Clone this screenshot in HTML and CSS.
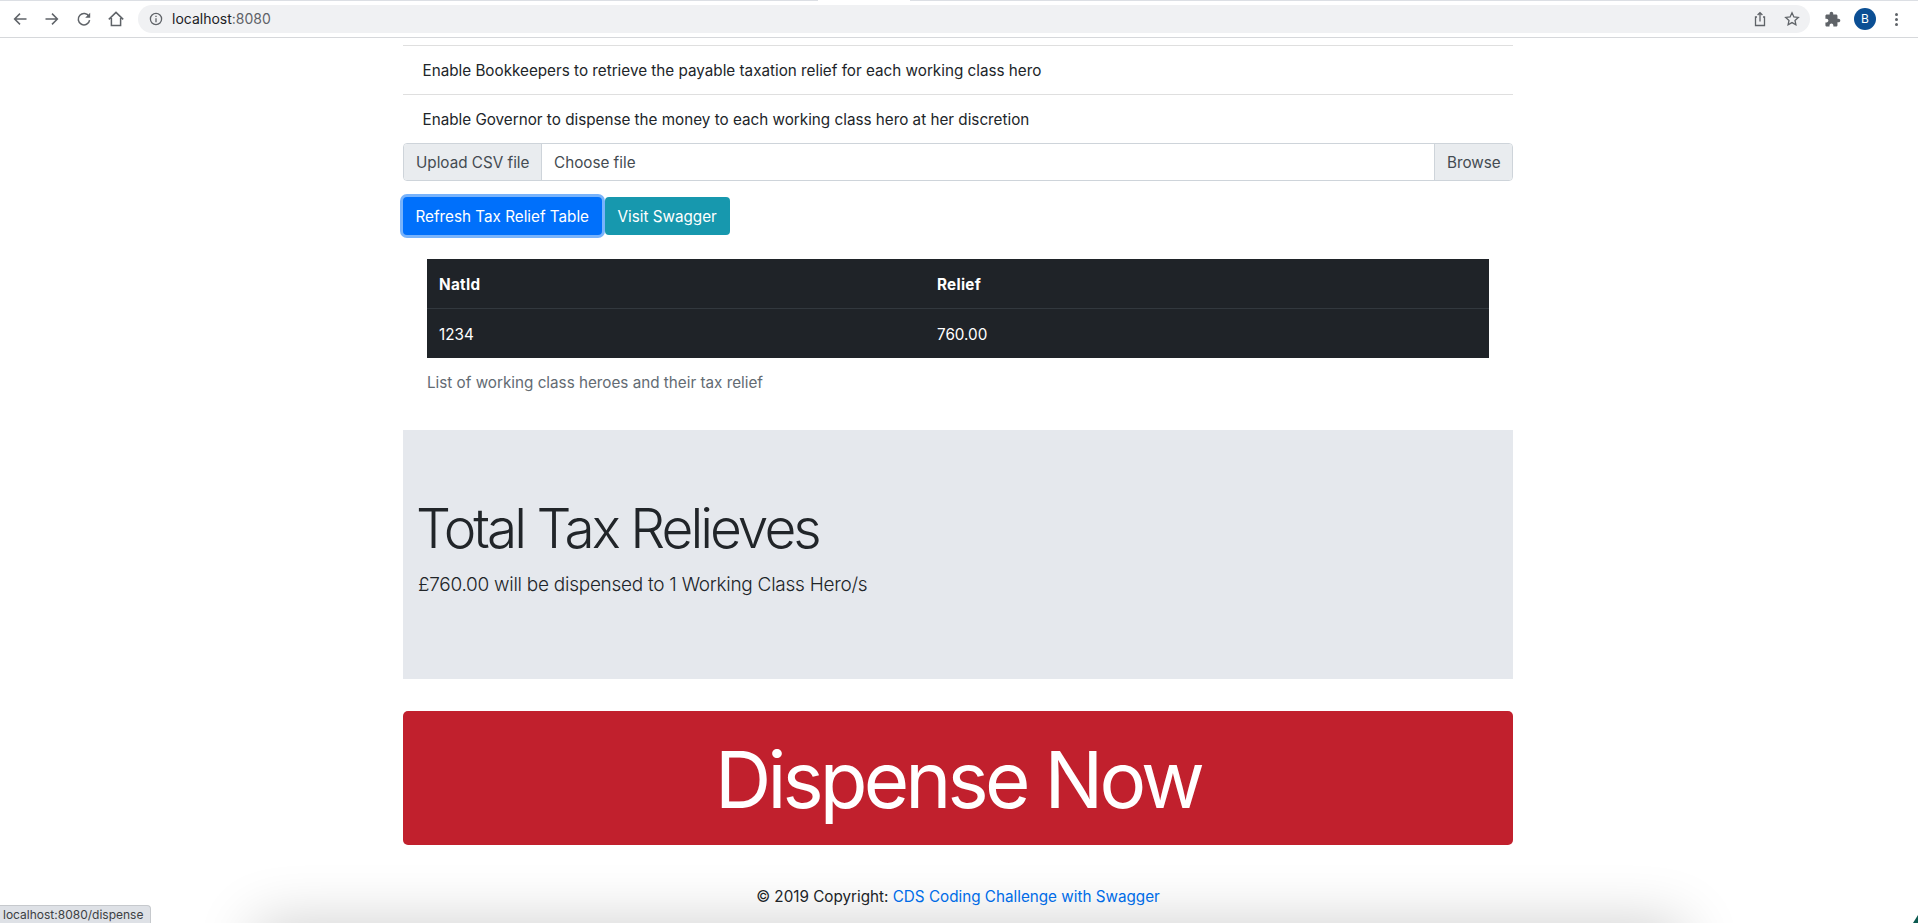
FILE: index.html
```html
<!DOCTYPE html>
<html lang="en">
<head>
    <meta charset="UTF-8">
    <title>Tax Relief Dispenser</title>
    <link rel="stylesheet" href="styles.css">
</head>
<body>
    <div class="toolbar">
        <div class="tab-gap"></div>
        <div class="nav-icons">
            <svg class="tool-icon" viewBox="0 0 16 16"><path d="M14.5 8H2.5M8 2.6L2.6 8 8 13.4"/></svg>
            <svg class="tool-icon" viewBox="0 0 16 16"><path d="M1.5 8h12M8 2.6L13.4 8 8 13.4"/></svg>
            <svg class="tool-icon" viewBox="0 0 16 16"><path d="M13 5.5a5.7 5.7 0 1 0 .6 3.6"/><path class="solid" d="M14.2 1.8v5h-5z"/></svg>
            <svg class="tool-icon" viewBox="0 0 16 16"><path d="M.8 8.4L8 1.4l7.2 7M3.4 7v7.6h9.2V7"/></svg>
        </div>
        <div class="omnibox">
            <svg class="info-icon" viewBox="0 0 14 14"><circle cx="7" cy="7" r="5.6"/><path d="M7 6.2v4M7 3.8v1.2"/></svg>
            <span class="url">localhost<span class="url-port">:8080</span></span>
            <svg class="omni-icon" viewBox="0 0 16 16"><path d="M5 6H3.5v8.5h9V6H11M8 10.5V1.8M5.6 4L8 1.6 10.4 4"/></svg>
            <svg class="omni-icon star" viewBox="0 0 16 16"><path d="M8 1.8l1.9 4.1 4.4.5-3.3 3 .9 4.4L8 11.6l-3.9 2.2.9-4.4-3.3-3 4.4-.5z"/></svg>
        </div>
        <div class="ext-icons">
            <svg class="puzzle" viewBox="0 0 24 24"><path d="M20.5 11H19V7c0-1.1-.9-2-2-2h-4V3.5C13 2.12 11.88 1 10.5 1S8 2.12 8 3.5V5H4c-1.1 0-1.99.9-1.99 2v3.8H3.5c1.49 0 2.7 1.21 2.7 2.7s-1.21 2.7-2.7 2.7H2V20c0 1.1.9 2 2 2h3.8v-1.5c0-1.49 1.21-2.7 2.7-2.7 1.49 0 2.7 1.21 2.7 2.7V22H17c1.1 0 2-.9 2-2v-4h1.5c1.38 0 2.5-1.12 2.5-2.5S21.88 11 20.5 11z"/></svg>
            <div class="avatar">B</div>
            <div class="dots"><i></i><i></i><i></i></div>
        </div>
    </div>

    <div class="container">
        <ul class="todo-list">
            <li>Enable Bookkeepers to retrieve the payable taxation relief for each working class hero</li>
            <li>Enable Governor to dispense the money to each working class hero at her discretion</li>
        </ul>

        <div class="input-group">
            <span class="input-label">Upload CSV file</span>
            <span class="file-name">Choose file</span>
            <span class="browse">Browse</span>
        </div>

        <div class="actions">
            <a class="btn btn-primary" href="#">Refresh Tax Relief Table</a>
            <a class="btn btn-info" href="#">Visit Swagger</a>
        </div>

        <div class="table-wrap">
            <table class="relief-table">
                <thead>
                    <tr><th class="col-id">NatId</th><th>Relief</th></tr>
                </thead>
                <tbody>
                    <tr><td>1234</td><td>760.00</td></tr>
                </tbody>
            </table>
            <p class="caption">List of working class heroes and their tax relief</p>
        </div>

        <div class="jumbotron">
            <h1>Total Tax Relieves</h1>
            <p>£760.00 will be dispensed to 1 Working Class Hero/s</p>
        </div>

        <a class="btn-dispense" href="#">Dispense Now</a>

        <footer class="footer">© 2019 Copyright: <a href="#">CDS Coding Challenge with Swagger</a></footer>
    </div>

    <div class="download-shadow"></div>
    <div class="status-bubble">localhost:8080/dispense</div>
    <div class="desktop-corner"></div>
</body>
</html>
```

FILE: styles.css
```css
* {
    box-sizing: border-box;
}
html, body {
    height: 100%;
}
body {
    margin: 0;
    font-family: 'Inter', sans-serif;
    font-size: 15.24px;
    line-height: 24px;
    color: #212529;
    background: #fff;
    overflow: hidden;
}
a {
    text-decoration: none;
}

.toolbar {
    height: 38px;
    display: flex;
    align-items: center;
    background: #fff;
    border-top: 1px solid #dcdfe4;
    border-bottom: 1px solid #d6d8db;
}
.tab-gap {
    position: absolute;
    left: 818px;
    top: 0;
    width: 92px;
    height: 1px;
    background: #fff;
}
.nav-icons {
    display: flex;
    gap: 16px;
    padding-left: 12px;
    width: 138px;
}
.tool-icon {
    width: 16px;
    height: 16px;
    fill: none;
    stroke: #5f6368;
    stroke-width: 1.5;
}
.tool-icon .solid {
    fill: #5f6368;
    stroke: none;
}
.omnibox {
    width: 1672px;
    height: 28px;
    border-radius: 14px;
    background: #f0f1f3;
    display: flex;
    align-items: center;
    padding: 0 10px 0 11px;
}
.info-icon {
    width: 14px;
    height: 14px;
    fill: none;
    stroke: #5f6368;
    stroke-width: 1.3;
}
.url {
    margin-left: 9px;
    font-size: 14px;
    color: #202124;
    flex: 1;
}
.url-port {
    color: #5f6368;
}
.omni-icon {
    width: 16px;
    height: 16px;
    fill: none;
    stroke: #5f6368;
    stroke-width: 1.3;
}
.star {
    margin-left: 16px;
}
.ext-icons {
    display: flex;
    align-items: center;
    padding-left: 14px;
}
.puzzle {
    width: 17px;
    height: 17px;
    fill: #5f6368;
}
.avatar {
    width: 22px;
    height: 22px;
    margin-left: 13px;
    border-radius: 50%;
    background: #0b4f94;
    color: #fff;
    font-size: 12px;
    line-height: 22px;
    text-align: center;
}
.dots {
    display: flex;
    flex-direction: column;
    gap: 2px;
    margin-left: 19px;
}
.dots i {
    width: 3px;
    height: 3px;
    border-radius: 50%;
    background: #5f6368;
}

.container {
    width: 1110px;
    margin-left: 403px;
    padding-top: 7px;
}
.todo-list {
    list-style: none;
    margin: 0;
    padding: 0;
}
.todo-list li {
    height: 49px;
    padding: 13px 20px 11px 19.5px;
    border-top: 1px solid #dfdfdf;
    color: #212529;
}
.input-group {
    display: flex;
    height: 38px;
    border: 1px solid #ced4da;
    border-radius: 4px;
    color: #444b52;
    overflow: hidden;
}
.input-label {
    width: 138px;
    padding: 7px 0 5px 12px;
    background: #e9ecef;
    border-right: 1px solid #ced4da;
}
.browse {
    width: 78px;
    padding: 7px 0 5px 12px;
    background: #e9ecef;
    border-left: 1px solid #ced4da;
}
.file-name {
    flex: 1;
    padding: 7px 12px 5px;
}
.actions {
    display: flex;
    gap: 3px;
    margin-top: 16px;
}
.btn {
    display: block;
    height: 38px;
    padding: 8px 12.5px 6px;
    border-radius: 4px;
    color: #fff;
}
.btn-primary {
    background: #0070fb;
    box-shadow: 0 0 0 3px #78b3fb;
}
.btn-info {
    padding: 8px 13px 6px;
    background: #1798ae;
}
.table-wrap {
    padding: 24px 24px 0;
}
.relief-table {
    width: 100%;
    border-collapse: collapse;
    background: #1f2328;
    color: #fff;
    table-layout: fixed;
}
.relief-table th, .relief-table td {
    height: 49.5px;
    padding: 13px 12px 11px;
    text-align: left;
}
.relief-table th {
    font-weight: 700;
    letter-spacing: 0.3px;
    border-bottom: 1px solid #32383e;
}
.col-id {
    width: 498px;
}
.caption {
    margin: 0;
    padding: 13px 0 11px;
    color: #636b73;
}
.jumbotron {
    height: 249px;
    margin-top: 24px;
    padding: 65px 16px 0 13px;
    background: #e5e8ed;
}
.jumbotron h1 {
    margin: 0 0 8px;
    font-size: 55px;
    font-weight: 300;
    letter-spacing: -3px;
    line-height: 67px;
}
.jumbotron p {
    margin: 0;
    padding-left: 2px;
    font-size: 19px;
    font-weight: 300;
    letter-spacing: -0.27px;
    line-height: 30px;
}
.btn-dispense {
    display: block;
    height: 134px;
    margin-top: 32px;
    padding-top: 3px;
    border-radius: 5px;
    background: #c1202d;
    color: #fff;
    font-size: 78px;
    font-weight: 400;
    letter-spacing: -3.85px;
    line-height: 131px;
    text-align: center;
}
.footer {
    margin-top: 40px;
    text-align: center;
    color: #212529;
}
.footer a {
    color: #0070f0;
}

/* shelf shadow at the bottom edge, clipped to the window */
.download-shadow {
    position: absolute;
    left: 0;
    right: 0;
    bottom: 0;
    height: 70px;
    overflow: hidden;
    pointer-events: none;
}
.download-shadow::after {
    content: "";
    position: absolute;
    left: 255px;
    right: 235px;
    top: 70px;
    height: 60px;
    box-shadow: 0 0 60px rgba(0, 0, 0, 0.2);
}
.status-bubble {
    position: absolute;
    left: 0;
    bottom: 0;
    height: 18px;
    padding: 0 7px 0 3px;
    border: 1px solid #c6c9cd;
    border-width: 1px 1px 0 0;
    border-top-right-radius: 4px;
    background: #dee1e6;
    color: #3c4043;
    font-size: 12px;
    line-height: 18px;
}
.desktop-corner {
    position: absolute;
    right: 0;
    bottom: 0;
    width: 5px;
    height: 8px;
    background: #0b5a50;
    clip-path: polygon(100% 0, 100% 100%, 0 100%);
}
```
